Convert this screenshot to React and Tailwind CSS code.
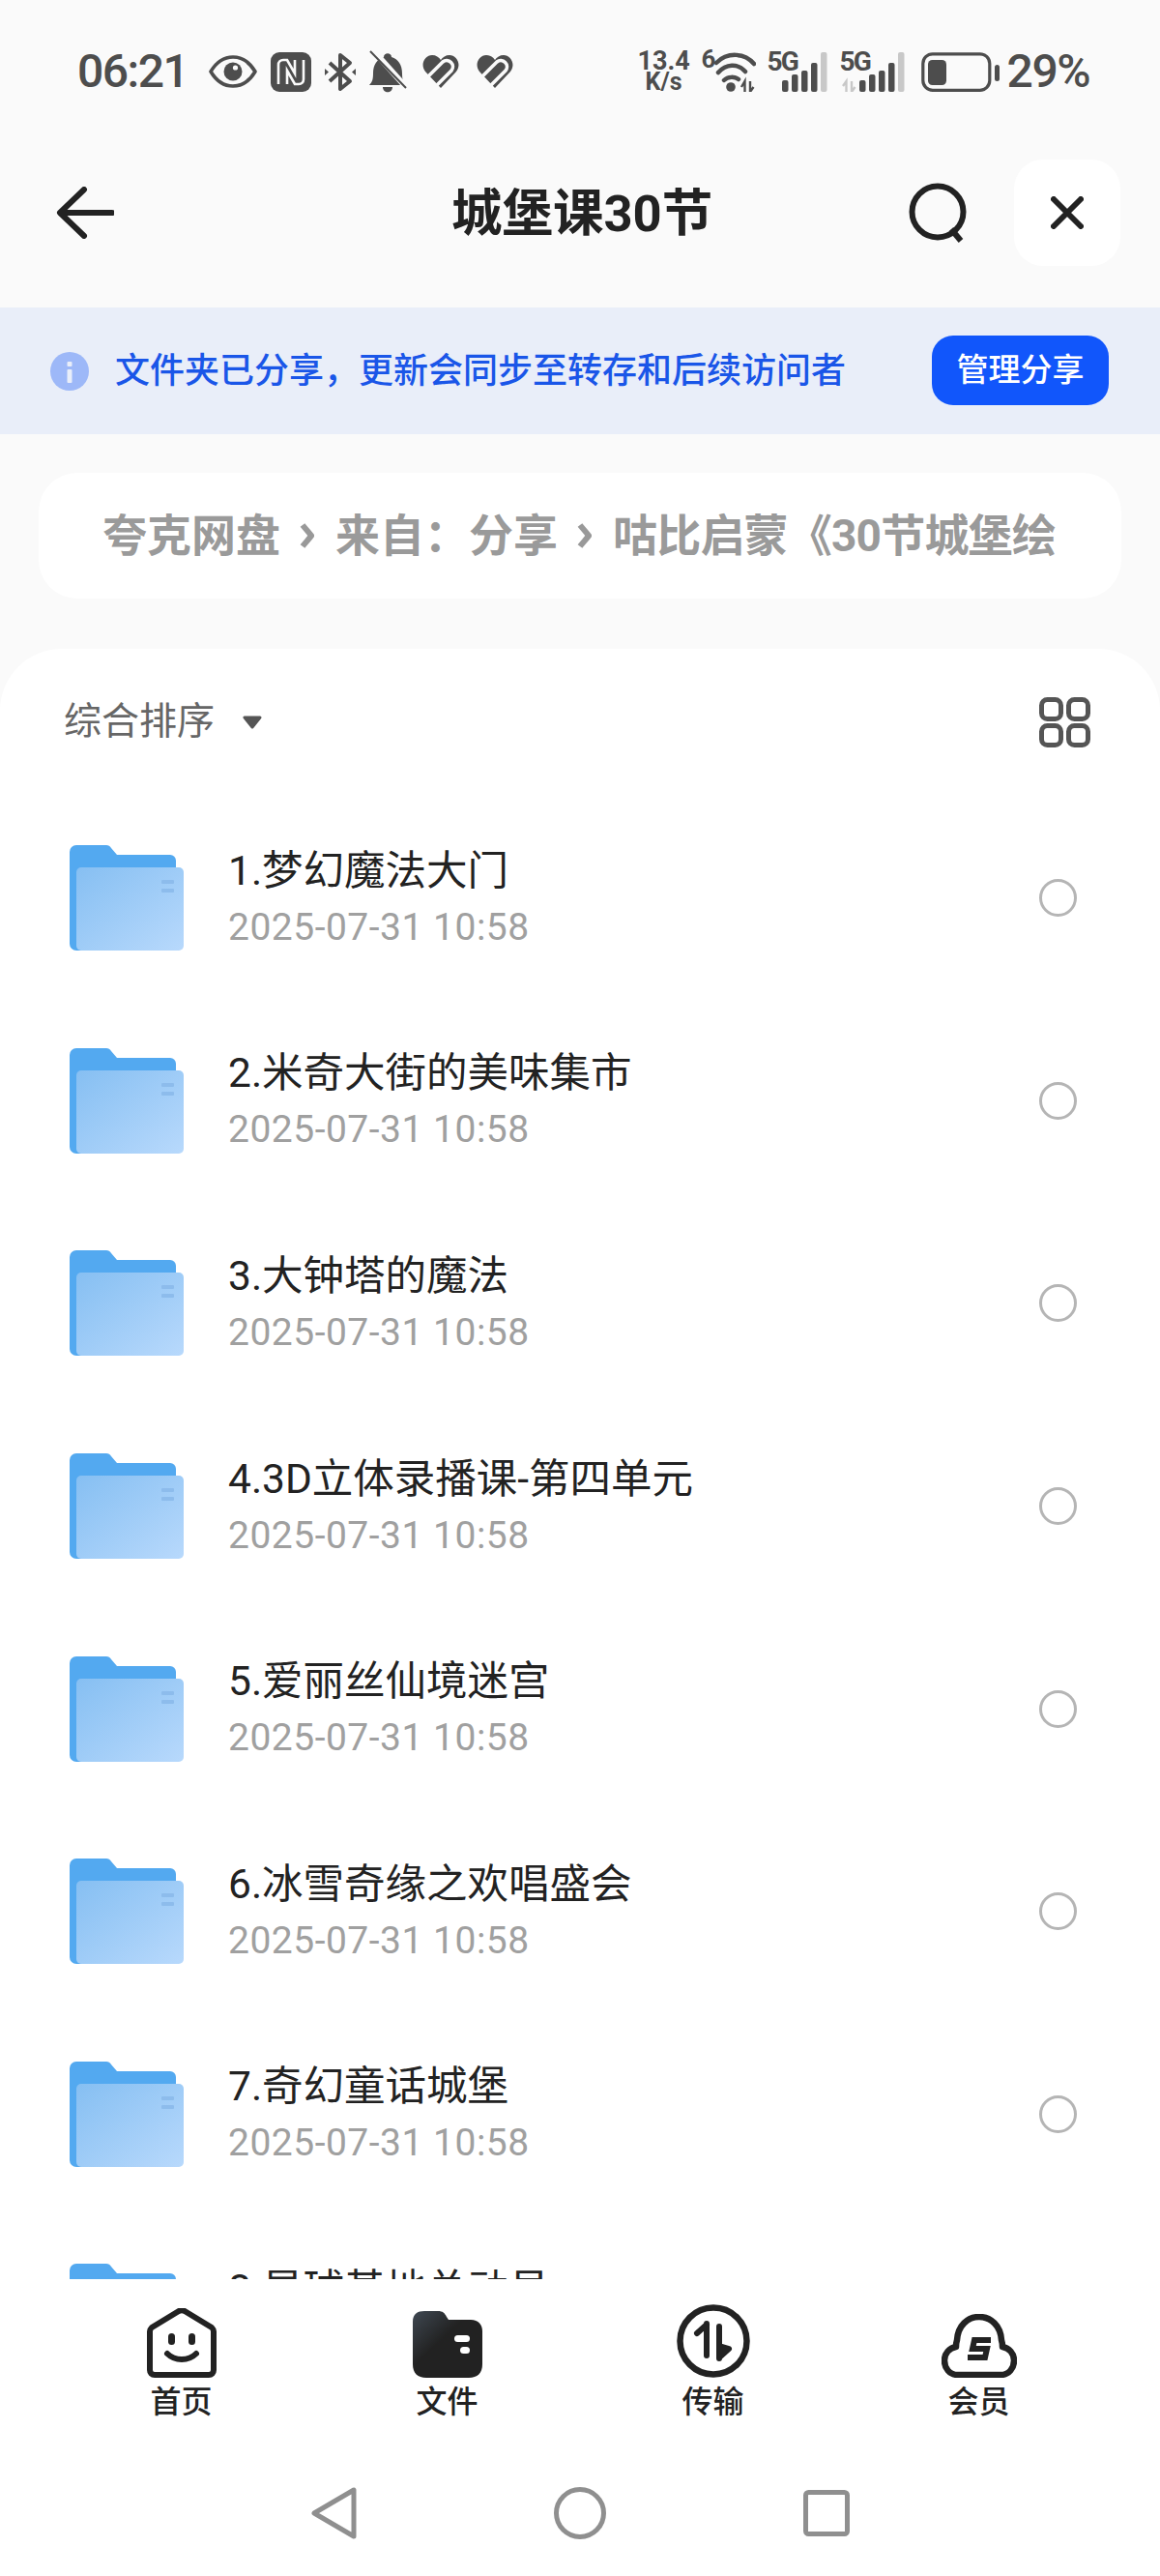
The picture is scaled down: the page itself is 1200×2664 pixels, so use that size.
import React from 'react';

const files = [
  '1.梦幻魔法大门',
  '2.米奇大街的美味集市',
  '3.大钟塔的魔法',
  '4.3D立体录播课-第四单元',
  '5.爱丽丝仙境迷宫',
  '6.冰雪奇缘之欢唱盛会',
  '7.奇幻童话城堡',
  '8.星球基地总动员',
];

const tabs = [
  { label: '首页', icon: <HomeIcon /> },
  { label: '文件', icon: <FilesIcon /> },
  { label: '传输', icon: <TransferIcon /> },
  { label: '会员', icon: <MemberIcon /> },
];

function EyeIcon() {
  return (
    <svg width="50" height="34" viewBox="0 0 50 34" className="ml-[22px]">
      <path d="M2 17C8 7 16 2 25 2s17 5 23 15c-6 10-14 15-23 15S8 27 2 17Z" fill="none" stroke="#4d4d4d" strokeWidth="3.6" strokeLinejoin="round" />
      <circle cx="25" cy="17" r="9.5" fill="#4d4d4d" />
      <circle cx="27.5" cy="13" r="2.6" fill="#fafafa" />
    </svg>
  );
}

function NfcIcon() {
  return (
    <svg width="42" height="41" viewBox="0 0 42 41" className="ml-[14px]">
      <rect width="42" height="41" rx="9" fill="#4d4d4d" />
      <path d="M8 33V13c0-3 2-5 5-5h4l8 14V8" fill="none" stroke="#fafafa" strokeWidth="2.6" />
      <path d="M34 8v20c0 3-2 5-5 5h-4l-8-14v14" fill="none" stroke="#fafafa" strokeWidth="2.6" />
    </svg>
  );
}

function BluetoothIcon() {
  return (
    <svg width="32" height="41" viewBox="0 0 32 41" className="ml-[14px]">
      <path d="M5 11l21 19-10 8V3l10 8L5 30" fill="none" stroke="#4d4d4d" strokeWidth="4" strokeLinejoin="round" />
      <path d="M0 17l4 3.500-4 3.500ZM32 17l-4 3.500 4 3.500Z" fill="#4d4d4d" />
    </svg>
  );
}

function BellOffIcon() {
  return (
    <svg width="39" height="44" viewBox="0 0 39 44" className="ml-[14px]">
      <path d="M0 36c3-3 4-6 4-12 0-9 4-15 11-17 0-5 8-5 8 0 7 2 11 8 11 17 0 6 1 9 3 12Z" fill="#4d4d4d" />
      <path d="M14 38h10c0 7-10 7-10 0Z" fill="#4d4d4d" />
      <path d="M3 -1l34 38" stroke="#fafafa" strokeWidth="6" />
      <path d="M1 1l37 38" stroke="#4d4d4d" strokeWidth="2" />
    </svg>
  );
}

function HeartIcon({ className }) {
  return (
    <svg width="38" height="34" viewBox="0 0 38 34" className={className}>
      <path d="M19 34L3 17C-3 9 3 0 10 0c4 0 7 2 9 5 2-3 5-5 9-5 7 0 13 9 7 17Z" fill="#4d4d4d" />
      <path d="M5 23L21 7A6.400 6.400 0 0 1 30 16L15 31" fill="none" stroke="#fafafa" strokeWidth="3.600" />
    </svg>
  );
}

function WifiIcon() {
  return (
    <div className="relative ml-[12px] h-[41px] w-[56px]">
      <span className="absolute left-0 top-[-6px] text-[26px] leading-[26px] font-bold">6</span>
      <svg width="56" height="41" viewBox="0 0 56 41" className="absolute inset-0">
        <path d="M15 11C26 0 44 0 54 12" fill="none" stroke="#4d4d4d" strokeWidth="4.500" strokeLinecap="round" />
        <path d="M17 21C25 12 37 11 45 20" fill="none" stroke="#4d4d4d" strokeWidth="4.500" strokeLinecap="round" />
        <path d="M23 29C27 25 34 25 38 28" fill="none" stroke="#4d4d4d" strokeWidth="4.500" strokeLinecap="round" />
        <circle cx="30" cy="36" r="4.800" fill="#4d4d4d" />
        <path d="M41 36l3.500-6V41M50 30V41l3.500-5" fill="none" stroke="#4d4d4d" strokeWidth="2.400" />
      </svg>
    </div>
  );
}

function Signal({ arrows, className }) {
  const left = arrows ? 20 : 15;
  const width = arrows ? 67 : 62;
  const bars = [29, 23, 19, 11, 0];
  return (
    <div className={`relative h-[41px] ${arrows ? 'w-[67px]' : 'w-[62px]'} ${className}`}>
      <span className="absolute left-0 top-[-3px] text-[28px] leading-[26px] font-bold tracking-[-2px]">5G</span>
      <svg width={width} height="41" viewBox={`0 0 ${width} 41`} className="absolute inset-0">
        {bars.map((top, i) => (
          <rect key={i} x={left + i * 10} y={top} width="6.500" height={41 - top} rx="2" fill={i === 4 ? '#c8c8c8' : '#4d4d4d'} />
        ))}
        {arrows && <path d="M3 35l3.500-5V41M12 30V41l3.500-5" fill="none" stroke="#c8c8c8" strokeWidth="2.400" />}
      </svg>
    </div>
  );
}

function BatteryIcon() {
  return (
    <svg width="81" height="41" viewBox="0 0 81 41" className="ml-[17px]">
      <rect x="1.800" y="1.800" width="69" height="37.500" rx="10" fill="none" stroke="#4d4d4d" strokeWidth="3.200" />
      <rect x="7" y="8" width="19" height="26" rx="4.500" fill="#4d4d4d" />
      <rect x="76" y="13" width="5" height="17" rx="2.500" fill="#4d4d4d" />
    </svg>
  );
}

function StatusBar() {
  return (
    <div className="flex h-[146px] items-center justify-between pl-[80px] pr-[73px] pt-[2px] text-[#4d4d4d]">
      <div className="flex items-center">
        <span className="text-[48px] leading-none font-medium tracking-[-1.500px]">06:21</span>
        <EyeIcon />
        <NfcIcon />
        <BluetoothIcon />
        <BellOffIcon />
        <HeartIcon className="ml-[16px]" />
        <HeartIcon className="ml-[18px]" />
      </div>
      <div className="flex items-center">
        <div className="flex w-[54px] flex-col items-center font-bold">
          <span className="text-[27px] leading-[22px]">13.4</span>
          <span className="text-[25px] leading-[22px]">K/s</span>
        </div>
        <WifiIcon />
        <Signal className="ml-[12px]" />
        <Signal arrows className="ml-[13px]" />
        <BatteryIcon />
        <span className="ml-[8px] text-[48px] leading-none font-medium tracking-[-1.500px]">29%</span>
      </div>
    </div>
  );
}

function Header() {
  return (
    <div className="relative flex h-[172px] items-center justify-between pb-[24px] pl-[58px] pr-[41px]">
      <svg width="60" height="54" viewBox="0 0 60 54">
        <path d="M29 3L4 27l25 24M5 27h53" fill="none" stroke="#222" strokeWidth="6" strokeLinecap="round" strokeLinejoin="round" />
      </svg>
      <span className="absolute left-[467px] top-[45px] text-[52.500px] leading-[60px] font-bold text-[#222]">城堡课30节</span>
      <div className="flex items-center gap-[47px]">
        <svg width="62" height="62" viewBox="0 0 62 62">
          <circle cx="30" cy="30" r="26.500" fill="none" stroke="#222" strokeWidth="6" />
          <path d="M44 48l10 12" stroke="#222" strokeWidth="6" />
        </svg>
        <div className="flex h-[110px] w-[110px] items-center justify-center rounded-[30px] bg-white">
          <svg width="34" height="34" viewBox="0 0 34 34">
            <path d="M3 3l28 28M31 3L3 31" stroke="#222" strokeWidth="6" strokeLinecap="round" />
          </svg>
        </div>
      </div>
    </div>
  );
}

function ShareBanner() {
  return (
    <div className="flex h-[131px] items-center justify-between bg-[#e9eef9] pl-[52px] pr-[53px]">
      <div className="flex items-center">
        <svg width="40" height="40" viewBox="0 0 40 40">
          <circle cx="20" cy="20" r="20" fill="#9db8f8" />
          <rect x="17.500" y="10" width="5" height="5" rx="1" fill="#e9eef9" />
          <rect x="17.500" y="18" width="5" height="14" rx="1" fill="#e9eef9" />
        </svg>
        <span className="ml-[27px] text-[36px] leading-[44px] font-medium text-[#1a56e8]">文件夹已分享，更新会同步至转存和后续访问者</span>
      </div>
      <button className="mb-[2px] flex h-[72px] w-[183px] items-center justify-center rounded-[22px] bg-[#1156fb] text-[33px] font-medium text-white">管理分享</button>
    </div>
  );
}

function Breadcrumb() {
  const chevron = (
    <svg width="15" height="28" viewBox="0 0 15 28" className="ml-[20px] mr-[22px]">
      <path d="M3 3c4 5 7 8 9 11-2 3-5 6-9 11" fill="none" stroke="#999" strokeWidth="6" />
    </svg>
  );
  return (
    <div className="mx-[40px] mt-[40px] flex h-[130px] items-center overflow-hidden whitespace-nowrap rounded-[40px] bg-white pl-[66px] text-[46px] font-bold text-[#9a9a9a]">
      <span>夸克网盘</span>
      {chevron}
      <span>来自：分享</span>
      {chevron}
      <span className="tracking-[-0.800px]">咕比启蒙《30节城堡绘</span>
    </div>
  );
}

function FolderIcon() {
  return (
    <svg width="118" height="109" viewBox="0 0 118 109">
      <defs>
        <linearGradient id="folderFront" x1="0" y1="0" x2="1" y2="1">
          <stop offset="0" stopColor="#86bff2" />
          <stop offset="1" stopColor="#b8d9fc" />
        </linearGradient>
      </defs>
      <path d="M0 7a7 7 0 0 1 7-7h31c2 0 4 1 5 3l6 7h55a6 6 0 0 1 6 6v85a8 8 0 0 1-8 8H7a7 7 0 0 1-7-7Z" fill="#53a9f0" />
      <rect x="7" y="23" width="111" height="86" rx="5" fill="url(#folderFront)" />
      <rect x="95" y="36" width="13" height="4" rx="1" fill="#8dbcec" />
      <rect x="95" y="45" width="13" height="4" rx="1" fill="#8dbcec" />
    </svg>
  );
}

function FileRow({ name }) {
  return (
    <div className="flex h-[209.6px] shrink-0 items-center pl-[72px] pr-[86px]">
      <FolderIcon />
      <div className="ml-[46px] flex flex-1 flex-col">
        <span className="text-[42.500px] leading-[52px] text-[#222]">{name}</span>
        <span className="mt-[8px] text-[39px] leading-[48px] tracking-[0.500px] text-[#a0a0a0]">2025-07-31 10:58</span>
      </div>
      <div className="h-[39px] w-[39px] rounded-full border-[3px] border-[#b5b5b5]" />
    </div>
  );
}

function HomeIcon() {
  return (
    <svg width="72" height="72" viewBox="0 0 72 72">
      <path d="M3 24c0-2 1-3 2-4L33 3c2-1 4-1 6 0l28 17c1 1 2 2 2 4v40c0 3-2 5-5 5H8c-3 0-5-2-5-5Z" fill="none" stroke="#222" strokeWidth="6" strokeLinejoin="round" />
      <rect x="22" y="26" width="7" height="12" rx="3.500" fill="#222" />
      <rect x="43" y="26" width="7" height="12" rx="3.500" fill="#222" />
      <path d="M21 47c8 8 22 8 30 0" fill="none" stroke="#222" strokeWidth="6" strokeLinecap="round" />
    </svg>
  );
}

function FilesIcon() {
  return (
    <svg width="72" height="72" viewBox="0 0 72 72">
      <defs>
        <linearGradient id="tabFiles" x1="0" y1="0" x2="0.700" y2="0.700">
          <stop offset="0" stopColor="#3f4852" />
          <stop offset="0.600" stopColor="#222" />
        </linearGradient>
      </defs>
      <path d="M0 14C0 6 5 3 12 3h14c5 0 7 2 9 6l2 3h23c8 0 12 5 12 12v34c0 9-5 14-14 14H14C5 72 0 67 0 58Z" fill="url(#tabFiles)" />
      <rect x="43" y="28" width="16" height="7" rx="3.500" fill="#fff" />
      <rect x="49" y="40" width="10" height="7" rx="3.500" fill="#fff" />
    </svg>
  );
}

function TransferIcon() {
  return (
    <svg width="76" height="76" viewBox="0 0 76 76">
      <circle cx="38" cy="38" r="34.500" fill="none" stroke="#222" strokeWidth="6.500" />
      <path d="M31 20v33M31 21l-10 9" fill="none" stroke="#222" strokeWidth="6" strokeLinecap="round" strokeLinejoin="round" />
      <path d="M44 23v33M44 55l10-9-10-3Z" fill="#222" stroke="#222" strokeWidth="6" strokeLinecap="round" strokeLinejoin="round" />
    </svg>
  );
}

function MemberIcon() {
  return (
    <svg width="78" height="66" viewBox="0 0 78 66">
      <path d="M17 63C8 63 3 56 3 48c0-7 5-13 12-14 0-3 0-4 1-7C17 12 27 3 39 3s22 9 23 24c1 3 1 4 1 7 7 1 12 7 12 14 0 8-5 15-14 15Z" fill="none" stroke="#222" strokeWidth="6.500" strokeLinejoin="round" />
      <path d="M51 27H34l-2 9h15l-2 9H27" fill="none" stroke="#222" strokeWidth="6" />
    </svg>
  );
}

function TabBar() {
  return (
    <div className="grid grid-cols-4 px-[50px] pt-[26px]">
      {tabs.map((tab) => (
        <div key={tab.label} className="flex flex-col items-center">
          <div className="flex h-[76px] items-end">{tab.icon}</div>
          <span className="mt-[6px] text-[32px] leading-[38px] font-medium text-[#222]">{tab.label}</span>
        </div>
      ))}
    </div>
  );
}

function SystemNav() {
  return (
    <div className="flex flex-1 items-center justify-center gap-[204px] pt-[31px]">
      <svg width="47" height="54" viewBox="0 0 47 54">
        <path d="M44 3v48L3 27Z" fill="none" stroke="#8f8f8f" strokeWidth="5" strokeLinejoin="round" />
      </svg>
      <svg width="54" height="54" viewBox="0 0 54 54">
        <circle cx="27" cy="27" r="24.500" fill="none" stroke="#8f8f8f" strokeWidth="5" />
      </svg>
      <svg width="48" height="48" viewBox="0 0 48 48">
        <rect x="2.500" y="2.500" width="43" height="43" rx="3" fill="none" stroke="#8f8f8f" strokeWidth="5" />
      </svg>
    </div>
  );
}

export default function App() {
  return (
    <div className="flex h-[2664px] w-[1200px] flex-col overflow-hidden bg-[#fafafa] font-['Roboto','Noto_Sans_CJK_SC',sans-serif]">
      <StatusBar />
      <Header />
      <ShareBanner />
      <Breadcrumb />
      <div className="mt-[52px] flex min-h-0 flex-1 flex-col overflow-hidden rounded-t-[64px] bg-white">
        <div className="flex h-[153px] shrink-0 items-center justify-between pb-[2px] pl-[66px] pr-[72px]">
          <div className="flex items-center">
            <span className="text-[39px] text-[#666]">综合排序</span>
            <svg width="22" height="16" viewBox="0 0 22 16" className="ml-[28px]">
              <path d="M3 3h16L11 13Z" fill="#555" stroke="#555" strokeWidth="3" strokeLinejoin="round" />
            </svg>
          </div>
          <svg width="53" height="52" viewBox="0 0 53 52">
            <rect x="2.500" y="2.500" width="20" height="20" rx="6" fill="none" stroke="#555" strokeWidth="5" />
            <rect x="30.500" y="2.500" width="20" height="20" rx="6" fill="none" stroke="#555" strokeWidth="5" />
            <rect x="2.500" y="29.500" width="20" height="20" rx="6" fill="none" stroke="#555" strokeWidth="5" />
            <rect x="30.500" y="29.500" width="20" height="20" rx="6" fill="none" stroke="#555" strokeWidth="5" />
          </svg>
        </div>
        {files.map((name) => (
          <FileRow key={name} name={name} />
        ))}
      </div>
      <div className="flex h-[307px] shrink-0 flex-col bg-white">
        <TabBar />
        <SystemNav />
      </div>
    </div>
  );
}
